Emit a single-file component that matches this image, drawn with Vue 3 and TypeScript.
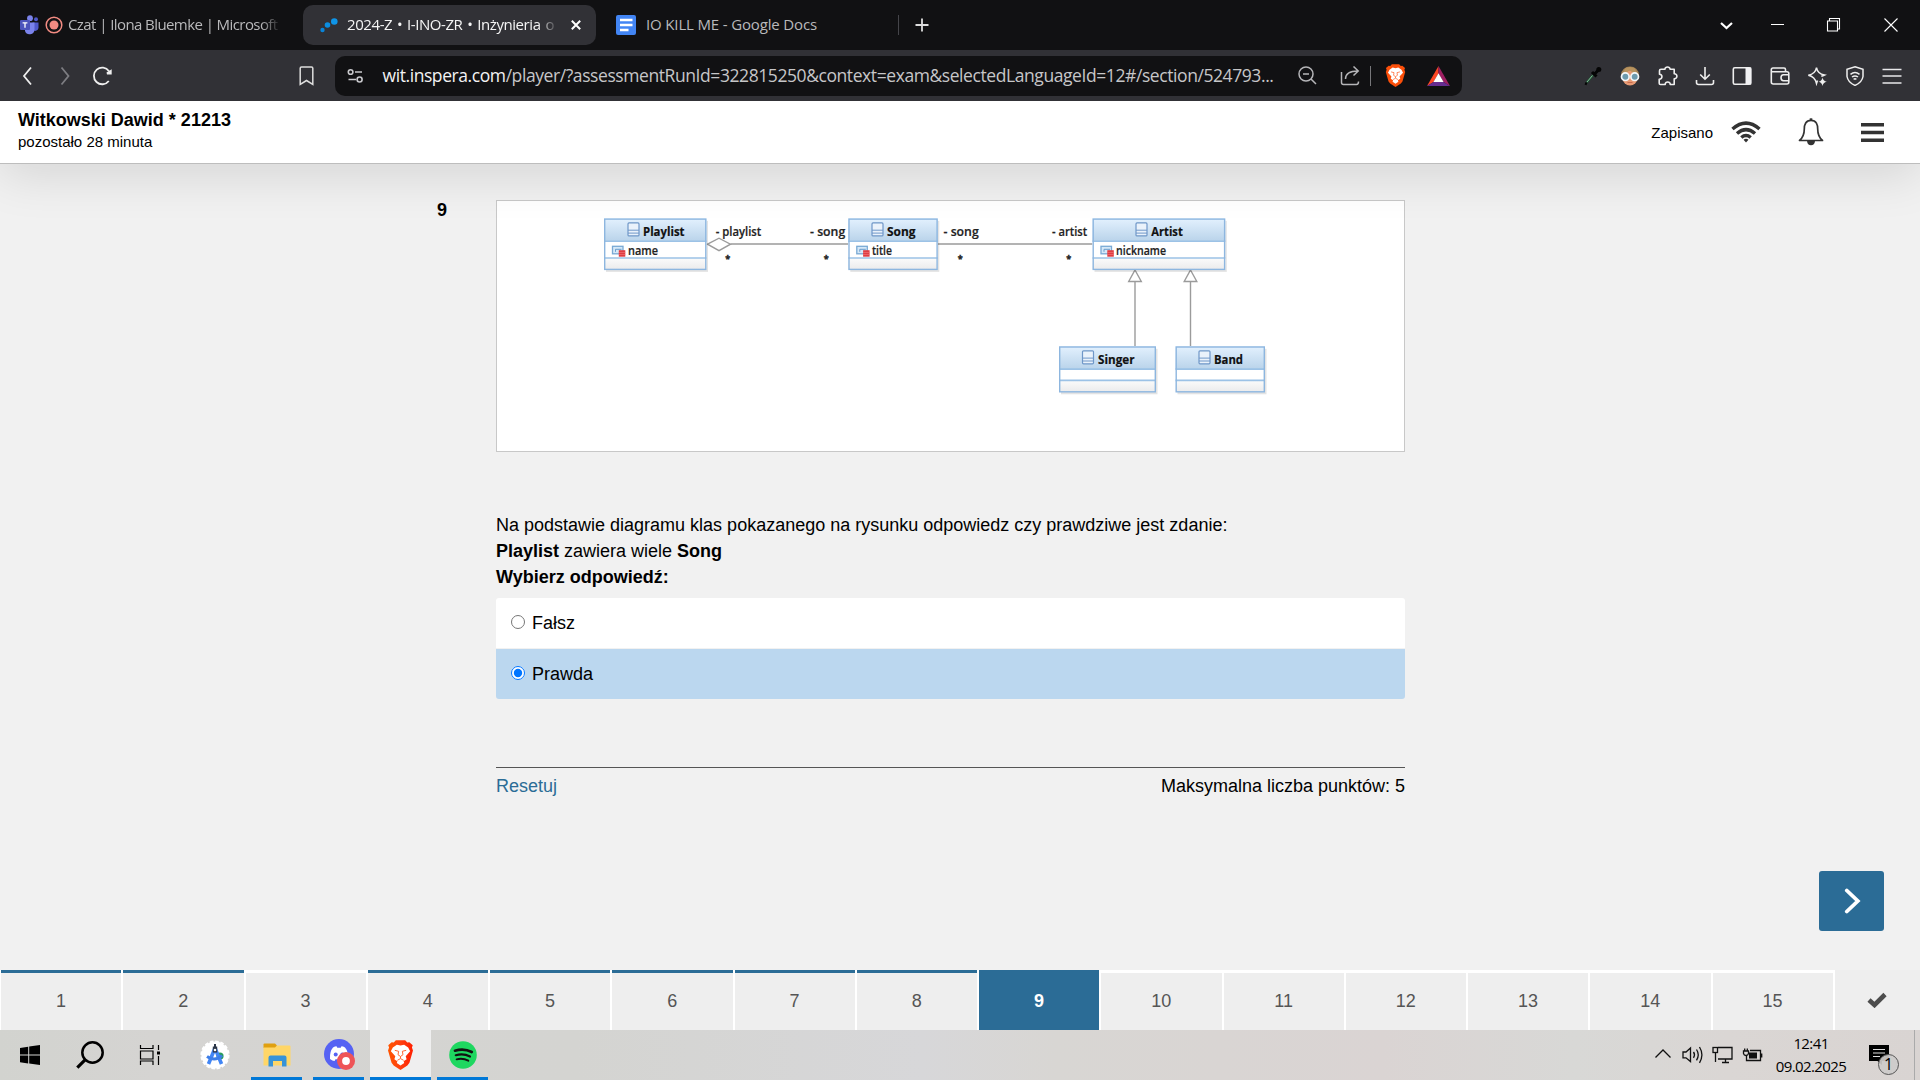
<script setup lang="ts">
import { ref } from 'vue'

interface UmlClass {
  name: string
  x: number
  y: number
  w: number
  h: number
  divider: number
  iconX: number
  textX: number
  textW: number
  attr?: string
  attrX?: number
  attrW?: number
}

interface Label {
  text: string
  x: number
  y: number
  w: number
}

const answer = ref('Prawda')
const options: string[] = ['Fałsz', 'Prawda']

const current = 9
const answered = new Set<number>([1, 2, 4, 5, 6, 7, 8])
const questions: number[] = Array.from({ length: 15 }, (_, i) => i + 1)

const classes: UmlClass[] = [
  { name: 'Playlist', x: 108, y: 18.4, w: 102.5, h: 51, divider: 58, iconX: 132, textX: 147, textW: 41.5, attr: 'name', attrX: 132, attrW: 30 },
  { name: 'Song', x: 352.3, y: 18.4, w: 89.5, h: 51, divider: 58, iconX: 376, textX: 391, textW: 28.5, attr: 'title', attrX: 376, attrW: 20 },
  { name: 'Artist', x: 596.5, y: 18.4, w: 132.8, h: 51, divider: 58, iconX: 640, textX: 655.300, textW: 31.5, attr: 'nickname', attrX: 620, attrW: 50 },
  { name: 'Singer', x: 563, y: 146.3, w: 97, h: 45.5, divider: 180.4, iconX: 586.5, textX: 602, textW: 36.5 },
  { name: 'Band', x: 679.5, y: 146.3, w: 89.5, h: 45.5, divider: 180.4, iconX: 703, textX: 718, textW: 29 },
]

const roles: Label[] = [
  { text: '- playlist', x: 219.8, y: 35.6, w: 45.5 },
  { text: '- song', x: 314, y: 35.6, w: 35.2 },
  { text: '- song', x: 447.5, y: 35.6, w: 35.2 },
  { text: '- artist', x: 556, y: 35.6, w: 35.2 },
]
const stars: number[] = [231.7, 330.2, 464.3, 572.6]
const inherits: number[] = [639, 694.5]
</script>

<template>
  <div class="screen">
    <svg class="defs" width="0" height="0" aria-hidden="true">
      <defs>
        <linearGradient id="head" x1="0" y1="0" x2="0" y2="1">
          <stop offset="0" stop-color="#e3f1fe" />
          <stop offset="1" stop-color="#b9d3ea" />
        </linearGradient>
        <linearGradient id="foot" x1="0" y1="0" x2="0" y2="1">
          <stop offset="0" stop-color="#fbfbfb" />
          <stop offset="1" stop-color="#ebebec" />
        </linearGradient>
        <linearGradient id="braveRed" x1="0" y1="0" x2="1" y2="0">
          <stop offset="0" stop-color="#ff5500" />
          <stop offset=".5" stop-color="#ff4010" />
          <stop offset="1" stop-color="#ff1f00" />
        </linearGradient>
        <symbol id="lion" viewBox="0 0 26 30">
          <path d="M6.5 2.5 8.5.3h9l2 2.2 2-.3L24.800 5.300 24 7.500l1 3-3.400 12.300-2 2.700L13 30l-6.600-4.500-2-2.700L1 10.500l1-3-.8-2.200L4.500 2.200z" />
          <path fill="#fff" d="M13 5.400 9.500 4.700 5.600 7.400 3.700 11.300 8 16.300 7.100 19.200 10 21.200 9.400 23 13 25.600 16.600 23 16 21.200 18.900 19.200 18 16.300 22.300 11.300 20.400 7.400 16.500 4.700z" />
          <path fill="none" stroke="#ff5a20" stroke-width=".9" d="M7.500 10.300 11.200 11.300 10.600 14.700 13 16.500 15.400 14.700 14.800 11.300 18.500 10.300M13 16.500v1.800M10 20.300 13 18.600l3 1.700" />
        </symbol>
      </defs>
    </svg>

    <!-- browser tab strip -->
    <div class="tabs">
      <div class="tab first">
        <svg class="teams" width="19" height="20" viewBox="0 0 19 20">
          <circle cx="10" cy="3.200" r="2.900" fill="#7b83eb" />
          <circle cx="16" cy="4.300" r="2" fill="#5059c9" />
          <path d="M12.500 7.500H18.500V13a3.300 3.300 0 0 1-6 1.500z" fill="#5059c9" />
          <path d="M5 7.500h9.500V14.500a4.900 4.900 0 0 1-9.500 1.500z" fill="#7b83eb" />
          <rect x="0" y="5" width="10" height="10" rx="1" fill="#4b53bc" />
          <path d="M2.600 7.800H7.400M5 7.800V12.700" stroke="#fff" stroke-width="1.300" />
        </svg>
        <svg class="rec" width="18" height="20" viewBox="0 0 18 20">
          <ellipse cx="9" cy="10" rx="7.800" ry="7.800" fill="none" stroke="#f28b82" stroke-width="1.500" />
          <circle cx="9" cy="10" r="4.500" fill="#f28b82" />
        </svg>
        <span class="tab-text fade t1">Czat | Ilona Bluemke | Microsoft</span>
      </div>
      <div class="tab active">
        <svg class="insp" width="18" height="18" viewBox="0 0 18 18">
          <circle cx="2.500" cy="14" r="2.200" fill="#0a84d8" /><circle cx="7.500" cy="9" r="2.800" fill="#0a8de0" /><circle cx="14.300" cy="5.500" r="3.300" fill="#0f95e8" />
        </svg>
        <span class="tab-text fade t2">2024-Z • I-INO-ZR • Inżynieria o</span>
        <svg class="tab-x" width="10" height="10" viewBox="0 0 10 10"><path d="M.8.8 9.200 9.200M9.200.8.8 9.200" stroke="#fff" stroke-width="2" /></svg>
      </div>
      <div class="tab third">
        <svg width="20" height="20" viewBox="0 0 20 20">
          <rect width="20" height="20" rx="2" fill="#4285f4" />
          <path d="M4 5H16.500M4 10H16.500M4 15H12.500" stroke="#fff" stroke-width="2.600" />
        </svg>
        <span class="tab-text t3">IO KILL ME - Google Docs</span>
      </div>
      <i class="tab-sep"></i>
      <svg class="plus" width="14" height="14" viewBox="0 0 14 14"><path d="M7 .5V13.500M.5 7H13.500" stroke="#ddd" stroke-width="1.800" /></svg>
      <svg class="wc" width="193" height="20" viewBox="0 0 193 20" fill="none" stroke="#fff">
        <path d="M2 8 7.500 13 13 8" stroke-width="2.200" />
        <path d="M52 9.500H65" stroke-width="1" />
        <path d="M108.500 6H118.500V16H108.500zM110.500 6V3.500H120.500V14H118.500" stroke-width="1.100" />
        <path d="M165.500 3.500 178.500 16.500M178.500 3.500 165.500 16.500" stroke-width="1.100" />
      </svg>
    </div>

    <!-- address bar -->
    <div class="toolbar">
      <svg class="nav" width="92" height="22" viewBox="0 0 92 22" fill="none">
        <path d="M11 2.500 4 11 11 19.500" stroke="#eee" stroke-width="1.800" />
        <path d="M41.500 2.500 48.500 11 41.500 19.500" stroke="#7d7d82" stroke-width="1.800" />
        <path d="M89 6.200A8.300 8.300 0 1 0 88.800 16" stroke="#eee" stroke-width="1.800" />
        <path d="M86.500 7.500 91.700 4.200V9.500H87z" fill="#eee" />
      </svg>
      <svg class="bm" width="15" height="20" viewBox="0 0 15 20"><path d="M1.200 2.300q0-1.300 1.300-1.300h10q1.300 0 1.300 1.300V18.500L7.500 14.500 1.200 18.500z" fill="none" stroke="#ddd" stroke-width="1.500" /></svg>
      <div class="url">
        <svg class="site" width="17" height="16" viewBox="0 0 17 16" fill="none" stroke="#c8c8cc" stroke-width="1.600">
          <circle cx="3.600" cy="4" r="2.300" /><path d="M8 4H15M1.500 11.500H9" /><circle cx="12.600" cy="11.500" r="2.500" />
        </svg>
        <span class="addr"><b>wit.inspera.com</b>/player/?assessmentRunId=322815250&amp;context=exam&amp;selectedLanguageId=12#/section/524793...</span>
        <svg class="zoomi" width="19" height="19" viewBox="0 0 19 19" fill="none" stroke="#b5b5b8" stroke-width="1.500">
          <circle cx="8" cy="8" r="7" /><path d="M5 8H11M13 13 18 18" />
        </svg>
        <svg class="share" width="20" height="20" viewBox="0 0 20 20" fill="none" stroke="#b5b5b8" stroke-width="1.500">
          <path d="M1.500 6V16.500q0 2 2 2H16.500q2 0 2-3M5.500 13C5.500 8 9 5 18 5M13.500.5 18.200 5 13.500 9.500" />
        </svg>
        <i class="url-sep"></i>
        <svg class="lion1" width="21" height="23" viewBox="0 0 26 30" preserveAspectRatio="none" fill="#fb4f0a"><use href="#lion" width="26" height="30" /></svg>
        <svg class="bat" width="23" height="20" viewBox="0 0 23 20">
          <path d="M11.500 0 0 20 6.500 16 11.500 7.500z" fill="#ff4724" />
          <path d="M11.500 0 23 20 16.500 16 11.500 7.500z" fill="#9e1f63" />
          <path d="M0 20H23L16.500 16H6.500z" fill="#662d91" />
          <path d="M11.500 7.300 6.400 16H16.600z" fill="#fff" />
        </svg>
      </div>
      <div class="exts">
        <svg width="20" height="20" viewBox="0 0 20 20">
          <path d="M3.500 17 10 9" stroke="#254a35" stroke-width="2.600" /><path d="M4 16 9.500 9.500" stroke="#8fd0a5" stroke-width=".9" /><path d="M2.500 18.800 3.500 16.500" stroke="#050505" stroke-width="2" />
          <path d="M9 6 13.500 10.500M11 8.500 16 3.500" stroke="#050505" stroke-width="3" /><circle cx="15.800" cy="3.600" r="2.500" fill="#050505" />
        </svg>
        <svg width="20" height="20" viewBox="0 0 20 20">
          <ellipse cx="10" cy="9" rx="9" ry="8.500" fill="#a58455" /><ellipse cx="10" cy="12" rx="7.500" ry="7.500" fill="#e69a74" />
          <path d="M3 8Q7 8 9.500 3.500 13 8 17 8L15 2.500 10 1 5 2.500z" fill="#b8935e" />
          <circle cx="5.300" cy="10.700" r="3.800" fill="#6d9aad" stroke="#f2f6f8" stroke-width="1.700" /><circle cx="14.700" cy="10.700" r="3.800" fill="#6d9aad" stroke="#f2f6f8" stroke-width="1.700" />
          <path d="M7.500 16.500H12.500" stroke="#c96b4e" />
        </svg>
        <svg width="20" height="20" viewBox="0 0 20 20" fill="none" stroke="#eee" stroke-width="1.600" stroke-linejoin="round">
          <path d="M3 3.200H7C6.600.2 12.400.2 12 3.200H16.200V7.700C19.800 7.500 19.800 13 16.200 12.700V18.500H12.200C12.600 15.200 6.800 15.200 7.200 18.500H2.500Q1.200 18.500 1.200 17.200V13.200C4.800 13 4.800 8.500 1.500 8.200V4.700Q1.500 3.200 3 3.200z" />
        </svg>
        <svg width="20" height="20" viewBox="0 0 20 20" fill="none" stroke="#eee" stroke-width="1.600">
          <path d="M10 1V13M5.200 8.500 10 13.200 14.800 8.500M1.500 14V16.500Q1.500 18.500 3.500 18.500H16.500Q18.500 18.500 18.500 16.500V14" />
        </svg>
        <svg width="20" height="20" viewBox="0 0 20 20">
          <rect x="1.300" y="1.800" width="17.400" height="16.500" rx="1.500" fill="none" stroke="#eee" stroke-width="1.600" /><rect x="13.500" y="1.500" width="5.800" height="17" fill="#f1f1f3" />
        </svg>
        <svg width="20" height="20" viewBox="0 0 20 20" fill="none" stroke="#eee" stroke-width="1.600">
          <path d="M15.500 5.500V3.500Q15.500 2 14 2H3Q1.300 2 1.300 3.700V16Q1.300 18 3.300 18H17Q18.800 18 18.800 16V7.500Q18.800 5.700 17 5.700H1.500M18.500 8.800H13.500Q11 9 11 11.800T13.500 14.700H18.500" />
        </svg>
        <svg width="20" height="20" viewBox="0 0 20 20">
          <path d="M9.500 1.500Q10.500 7.800 17.500 9 16 9.700 14.300 10.300M9.500 1.500Q8.500 7.800 1.300 9.200 8 10.500 9.500 17.500 10 16 10.500 14.500" fill="none" stroke="#eee" stroke-width="1.500" />
          <path d="M15.500 11.500Q16 15 19.800 15.700 16 16.400 15.500 20 15 16.400 11.500 15.700 15 15 15.500 11.500z" fill="#eee" />
        </svg>
        <svg width="20" height="20" viewBox="0 0 20 20" fill="none" stroke="#eee" stroke-width="1.500">
          <path d="M10 .8 18 3.300V10.500Q17 16.500 10 19.400 3 16.500 2 10.500V3.300zM5.500 8.300Q10 4.800 14.500 8.300M7 11Q10 8.800 13 11M8.600 13.300Q10 12.400 11.400 13.300" />
        </svg>
        <svg width="20" height="20" viewBox="0 0 20 20"><path d="M.5 3.500H19.500M.5 10H19.500M.5 17H19.500" stroke="#e8e8ea" stroke-width="1.600" /></svg>
      </div>
    </div>

    <!-- exam header -->
    <header class="exam-head">
      <div class="who">
        <strong>Witkowski Dawid * 21213</strong>
        <span>pozostało 28 minuta</span>
      </div>
      <span class="saved">Zapisano</span>
      <svg class="wifi" width="30" height="22" viewBox="0 0 30 22" fill="none" stroke="#333" stroke-width="3.500">
        <path d="M1.500 8Q15-3.800 28.500 8M6 12.500Q15 4.800 24 12.500M10.300 16.500Q15 12.600 19.700 16.500" /><path d="M12.500 18.700Q15 17 17.500 18.700L15 21.500z" fill="#333" stroke="none" />
      </svg>
      <svg class="bell" width="26" height="28" viewBox="0 0 26 28">
        <path d="M13 2.300C7.500 2.300 6.300 7 6.300 11 6.300 16.500 4.500 20 1.500 22.500H24.500C21.500 20 19.700 16.500 19.700 11 19.700 7 18.500 2.300 13 2.300z" fill="none" stroke="#333" stroke-width="1.700" stroke-linejoin="round" />
        <path d="M13 .3V2.500" stroke="#333" stroke-width="2.600" /><path d="M9 23H17Q16.500 27.300 13 27.300T9 23z" fill="#333" />
      </svg>
      <svg class="burger" width="23" height="19" viewBox="0 0 23 19"><path d="M0 1.800H23M0 9.500H23M0 17.200H23" stroke="#333" stroke-width="3.600" /></svg>
    </header>

    <main class="exam">
      <span class="qnum">9</span>
      <section class="question">
        <svg class="diagram" width="907" height="250" viewBox="1 1 907 250">
          <g stroke="#9b9b9b" stroke-width="1.400" fill="#fff">
            <path d="M234.500 44H352M441.500 44H596.500" />
            <path d="M211.500 44.200 223 38.200 234.500 44.200 223 50.700z" />
            <g v-for="x in inherits" :key="x">
              <path :d="`M${x} 82V146`" />
              <path :d="`M${x} 70L${x + 6.300} 81.500H${x - 6.300}z`" />
            </g>
          </g>
          <g v-for="c in classes" :key="c.name">
            <rect :x="c.x + 2" :y="c.y + 2.500" :width="c.w - .5" :height="c.h" fill="#000" opacity=".11" />
            <rect :x="c.x" :y="c.y" :width="c.w" :height="c.h" fill="#fff" />
            <rect :x="c.x" :y="c.y" :width="c.w" height="23" fill="url(#head)" />
            <rect :x="c.x" :y="c.divider" :width="c.w" :height="c.y + c.h - c.divider" fill="url(#foot)" />
            <path :d="`M${c.x} ${c.y + 22.800}h${c.w}M${c.x} ${c.divider}h${c.w}`" stroke="#9cc2e6" stroke-width="1.600" />
            <rect :x="c.x + .7" :y="c.y + .7" :width="c.w - 1.400" :height="c.h - .7" fill="none" stroke="#8db6df" stroke-width="1.400" />
            <rect :x="c.iconX" :y="c.y + 4.500" width="11" height="13" rx="1" fill="#eaf2fb" stroke="#6f97c8" stroke-width="1.200" />
            <path :d="`M${c.iconX} ${c.y + 11.800}h11M${c.iconX} ${c.y + 14.700}h11`" stroke="#6f97c8" stroke-width="1" />
            <text class="cls" :x="c.textX" :y="c.y + 17.200" :textLength="c.textW" lengthAdjust="spacingAndGlyphs">{{ c.name }}</text>
            <g v-if="c.attr">
              <rect :x="c.x + 8.500" :y="46.300" width="10.500" height="7.500" fill="#d4e8f8" stroke="#79a9d4" stroke-width="1.300" />
              <path :d="`M${c.x + 11.500} 51.800V49.300H${c.x + 17.500}`" fill="none" stroke="#6a9ccb" />
              <rect :x="c.x + 14.800" y="50.200" width="6.500" height="6.500" fill="#e03c42" />
              <path :d="`M${c.x + 14.800} 52.500h6.500M${c.x + 14.800} 54.500h6.500`" stroke="#f07a7d" stroke-width=".6" />
              <text class="lbl" :x="c.attrX" y="55" :textLength="c.attrW" lengthAdjust="spacingAndGlyphs">{{ c.attr }}</text>
            </g>
          </g>
          <text v-for="r in roles" :key="r.x" class="lbl" :x="r.x" :y="r.y" :textLength="r.w" lengthAdjust="spacingAndGlyphs">{{ r.text }}</text>
          <text v-for="s in stars" :key="s" class="star" :x="s" y="62.300" text-anchor="middle">*</text>
        </svg>

        <div class="prompt">
          <p>Na podstawie diagramu klas pokazanego na rysunku odpowiedz czy prawdziwe jest zdanie:</p>
          <p><b>Playlist</b> zawiera wiele <b>Song</b></p>
          <p><b>Wybierz odpowiedź:</b></p>
        </div>

        <div class="options">
          <label v-for="o in options" :key="o" class="option" :class="{ on: answer === o }">
            <input v-model="answer" type="radio" name="answer" :value="o" />
            <span>{{ o }}</span>
          </label>
        </div>

        <footer class="qfoot">
          <a>Resetuj</a>
          <span>Maksymalna liczba punktów: 5</span>
        </footer>
      </section>
      <button class="next" type="button" aria-label="Next">
        <svg width="17" height="26" viewBox="0 0 17 26"><path d="M2.800 2.500 13.800 13 2.800 23.500" fill="none" stroke="#fff" stroke-width="3.800" stroke-linecap="round" /></svg>
      </button>
    </main>

    <nav class="pager">
      <div v-for="q in questions" :key="q" class="page" :class="{ done: answered.has(q), current: q === current }"><span>{{ q }}</span></div>
      <div class="submit">
        <svg width="20" height="16" viewBox="0 0 20 16"><path d="M2 8 7.500 13 18 2.500" fill="none" stroke="#4d4d4d" stroke-width="4.600" /></svg>
      </div>
    </nav>

    <!-- system taskbar -->
    <div class="taskbar">
      <div class="sys"><svg width="20" height="20" viewBox="0 0 20 20"><path d="M0 2.900 8.200 1.700V9.500H0zM9.200 1.500 20 0V9.500H9.200zM0 10.500H8.200V18.400L0 17.200zM9.200 10.500H20V20L9.200 18.500z" /></svg></div>
      <div class="sys"><svg width="28" height="28" viewBox="0 0 28 28" fill="none" stroke="#000"><circle cx="16.500" cy="11.500" r="10.200" stroke-width="2.500" /><path d="M9.300 18.700 1.300 26.700" stroke-width="3.200" /></svg></div>
      <div class="sys"><svg width="22" height="20" viewBox="0 0 22 20" fill="none" stroke="#000" stroke-width="1.200"><path d="M1.500 0V3.500H14V0M1.500 20V16H14V20M1.500 6H14V14H1.500zM19.500 0V5M19.500 11V20" /><path d="M18 6.500h3v3h-3z" fill="#000" stroke="none" /></svg></div>
      <div class="app studio">
        <svg width="30" height="30" viewBox="0 0 30 30">
          <circle cx="15" cy="15" r="13.600" fill="#fff" /><circle cx="15" cy="15" r="13.800" fill="none" stroke="#fff" stroke-width="1.600" stroke-dasharray="3.600 1.800" />
          <circle cx="20" cy="16" r="3.600" fill="#2a9d5c" />
          <path d="M15 8 8.500 24M15 8 21.500 24" stroke="#4286f5" stroke-width="3.600" /><path d="M7 16.500Q15 22 22 15.500" fill="none" stroke="#3d7ee8" stroke-width="3" />
          <path d="M12.800 6.500H17.200V12.500H12.800z" fill="#2b3648" /><circle cx="15" cy="10" r="1.300" fill="#fff" /><path d="M15 4V7" stroke="#2b3648" stroke-width="2" />
        </svg>
      </div>
      <div class="app run">
        <svg width="28" height="24" viewBox="0 0 28 24">
          <path d="M.5 1.500Q.5.500 1.500.5H12L14 2.500V5H.5z" fill="#e0a010" /><path d="M.5 4.500H12L14 2.500H26.500Q27.500 2.500 27.500 3.500V22.500H.5z" fill="#ffd667" />
          <path d="M5.500 23.500V14.500Q5.500 12.500 7.500 12.500H21.500Q23.500 12.500 23.500 14.500V23.500H19V18H10V23.500z" fill="#3793d8" />
        </svg>
      </div>
      <div class="app run">
        <svg class="discord" width="32" height="32" viewBox="0 0 32 32">
          <circle cx="15" cy="15" r="15" fill="#5662f3" />
          <path d="M6 20Q5.500 12.500 9 8.500 11 7.300 12.500 7.300L13.300 8.700H16.700L17.500 7.300Q19 7.300 21 8.500 24.500 12.500 24 20 21.500 22 19.500 22L18.500 20.300H11.500L10.500 22Q8.500 22 6 20z" fill="#fff" />
          <circle cx="11.700" cy="15.500" r="2" fill="#5662f3" /><circle cx="18.300" cy="15.500" r="2" fill="#5662f3" />
          <circle cx="22" cy="22" r="9" fill="#ee5457" /><circle cx="22" cy="22" r="3.900" fill="#fff" />
        </svg>
      </div>
      <div class="app run wide"><svg width="27" height="30" viewBox="0 0 26 30" preserveAspectRatio="none" fill="url(#braveRed)"><use href="#lion" width="26" height="30" /></svg></div>
      <div class="app run">
        <svg width="28" height="28" viewBox="0 0 28 28" fill="none" stroke="#111" stroke-linecap="round"><circle cx="14" cy="14" r="13.800" fill="#1ed760" stroke="none" /><path d="M6 9.700Q15 7 22.800 11" stroke-width="2.700" /><path d="M6.800 14.200Q14.500 12 21 15.500" stroke-width="2.200" /><path d="M7.600 18.300Q14 16.800 19.300 19.700" stroke-width="1.900" /></svg>
      </div>
      <div class="tray">
        <svg width="110" height="24" viewBox="0 0 110 24" fill="none" stroke="#111" stroke-width="1.300">
          <path d="M1.500 14.500 9 7 16.500 14.500" />
          <path d="M29 9H32L36.500 5V18.500L32 14.800H29zM39.500 9Q41.500 11.800 39.500 14.800M42.500 6.500Q46 11.800 42.500 17.300M45.500 4Q50.300 11.800 45.500 19.800" />
          <path d="M64 4.500H78V16H64M61.500 10V19M68 19.500H75M71.500 16V19.500" /><rect x="59" y="4.500" width="4.500" height="5" />
          <path d="M96 7.500H106.500V17.500H92.500V13M107.700 10.500V14.500" /><rect x="95" y="9.500" width="8" height="6" fill="#111" stroke="none" />
          <path d="M89.500 8H94.500V10.500Q94 12.500 92 12.500T89.500 10.500zM90.700 5.500V8M93.300 5.500V8" />
        </svg>
      </div>
      <div class="clock"><span>12:41</span><span class="date">09.02.2025</span></div>
      <div class="note">
        <svg width="20" height="20" viewBox="0 0 20 20"><path d="M0 0H20V16H13V20L8.500 16H0z" fill="#000" /><path d="M4 4.500H16M4 8H16M4 11.500H11" stroke="#ddd" stroke-width="1.200" /></svg>
        <span class="badge">1</span>
      </div>
      <i class="peek"></i>
    </div>
  </div>
</template>

<style>
body {
  margin: 0;
  overflow: hidden;
}
</style>

<style scoped>
.screen {
  width: 1920px;
  height: 1080px;
  display: flex;
  flex-direction: column;
  overflow: hidden;
  background: #f1f1f1;
  color: #000;
  font-family: "Liberation Sans", Arial, sans-serif;
}
.defs { position: absolute; }
svg { display: block; flex: none; }
i { flex: none; }

.tabs {
  height: 50px;
  flex: none;
  display: flex;
  align-items: center;
  background: #111113;
  font-family: "Open Sans", "Noto Sans", sans-serif;
  font-size: 15px;
  color: #b9b9bb;
}
.tab { display: flex; align-items: center; box-sizing: border-box; }
.tab-text { margin-bottom: 2px; white-space: nowrap; overflow: hidden; line-height: 24px; }
.fade { mask-image: linear-gradient(to right, #000 calc(100% - 20px), transparent); }
.first { width: 303px; padding-left: 20px; }
.rec { margin-left: 6px; }
.t1 { width: 213px; margin-left: 5px; letter-spacing: -0.58px; }
.active {
  width: 293px;
  height: 40px;
  padding-left: 17px;
  border-radius: 10px;
  background: #313136;
  color: #f5f5f5;
}
.t2 { width: 211px; margin-left: 9px; letter-spacing: -0.42px; word-spacing: 1.3px; }
.tab-x { margin-left: 13px; }
.third { width: 302px; padding-left: 20px; }
.t3 { margin-left: 10px; letter-spacing: -0.15px; }
.tab-sep { width: 1px; height: 20px; background: #45454a; }
.plus { margin-left: 16px; }
.wc { margin-left: auto; margin-right: 8px; }

.toolbar {
  height: 51px;
  flex: none;
  display: flex;
  align-items: center;
  background: #313136;
}
.nav { margin-left: 20px; }
.bm { margin-left: 187px; }
.url {
  width: 1127px;
  height: 40px;
  margin-left: 21px;
  display: flex;
  align-items: center;
  border-radius: 10px;
  background: #111113;
  font-family: "Open Sans", "Noto Sans", sans-serif;
}
.site { margin-left: 12px; }
.addr {
  width: 892px;
  margin: 0 0 2px 18.5px;
  font-size: 17.5px;
  line-height: 26px;
  letter-spacing: -0.42px;
  white-space: nowrap;
  color: #c6c6c8;
}
.addr b { font-weight: 400; color: #f3f3f3; }
.zoomi { margin-left: 23.5px; }
.share { margin-left: 23px; }
.url-sep { width: 1px; height: 20px; margin-left: 10px; background: #77777a; }
.lion1 { margin-left: 14px; }
.bat { margin-left: 21px; }
.exts {
  width: 337px;
  margin-left: 112px;
  display: grid;
  grid-template-columns: repeat(9, 1fr);
  justify-items: center;
}

.exam-head {
  height: 62px;
  flex: none;
  display: flex;
  align-items: center;
  background: #fff;
  border-bottom: 1px solid #bdbdbd;
  box-shadow: 0 10px 50px rgba(0, 0, 0, 0.12);
  z-index: 1;
}
.toolbar, .tabs { z-index: 2; }
.who {
  margin: 0 auto 3px 18px;
  display: flex;
  flex-direction: column;
}
.who strong { font-size: 18px; line-height: 22px; }
.who span { font-size: 15px; line-height: 22px; }
.saved { font-size: 15px; }
.wifi { margin-left: 18px; }
.bell { margin-left: 37px; }
.burger { margin: 0 36px 0 37px; }

.exam {
  height: 806px;
  flex: none;
  box-sizing: border-box;
  position: relative;
  display: flex;
  align-items: flex-start;
  padding: 36px 0 0 437px;
  font-size: 18px;
}
.qnum { width: 59px; font-weight: 700; line-height: 20px; }
.question { width: 909px; }
.diagram { border: 1px solid #c8c8c8; background: #fff; }
.cls { font: 700 12.500px "Open Sans", "Noto Sans", sans-serif; fill: #111; stroke: #111; stroke-width: 0.2px; }
.lbl { font: 600 12.500px "Open Sans", "Noto Sans", sans-serif; fill: #222; stroke: #222; stroke-width: 0.2px; }
.star { font: 700 9px "Open Sans", "Noto Sans", sans-serif; fill: #222; stroke: #222; stroke-width: 0.4px; }

.prompt { margin-top: 60px; }
.prompt p { margin: 0; line-height: 26px; }
.options {
  margin-top: 8px;
  display: flex;
  flex-direction: column;
  gap: 1px;
  border-radius: 3px;
  overflow: hidden;
}
.option {
  height: 50px;
  display: flex;
  align-items: center;
  background: #fff;
}
.option.on { background: #bbd7ef; }
.option input { width: 14px; height: 14px; margin: 0 0 2px 15px; }
.option span { margin-left: 7px; }
.qfoot {
  margin-top: 68px;
  padding-top: 5px;
  display: flex;
  justify-content: space-between;
  border-top: 1px solid #555;
  line-height: 26px;
}
.qfoot a { color: #2b6c96; }
.next {
  position: absolute;
  right: 36px;
  bottom: 39px;
  width: 65px;
  height: 60px;
  padding: 0 0 0 25px;
  border: 0;
  border-radius: 3px;
  background: #2b6c96;
}

.pager {
  height: 60px;
  flex: none;
  display: flex;
  padding-left: 1px;
  background: #fff;
}
.page {
  width: 122.250px;
  flex: none;
  box-sizing: border-box;
  padding-right: 2px;
}
.page span {
  height: 60px;
  box-sizing: border-box;
  display: flex;
  align-items: center;
  justify-content: center;
  padding-bottom: 1px;
  border-top: 3px solid #fff;
  background: #eee;
  color: #555;
  font-size: 18px;
}
.page.done span { border-top-color: #2b6c96; }
.page.current span {
  border-top-color: #2b6c96;
  background: #2b6c96;
  color: #fff;
  font-weight: 700;
}
.submit {
  flex: 1;
  display: flex;
  align-items: center;
  justify-content: center;
  padding-bottom: 1px;
  background: #eee;
}

.taskbar {
  height: 50px;
  flex: none;
  display: flex;
  background: linear-gradient(to right, #d2d3cf, #d5d4d2 8%, #d4d4d1 30%, #d7d7d9 48%, #d8d6d3 55%, #dad4d3 72%, #d8d8d6 82%, #dad6d4 90%, #d9d4d2);
}
.sys { width: 60px; display: grid; place-items: center; }
.app {
  width: 61px;
  margin-right: 1px;
  box-sizing: border-box;
  position: relative;
  display: grid;
  place-items: center;
}
.studio { margin-left: 4px; }
.run::after {
  content: "";
  position: absolute;
  left: 5px;
  right: 5px;
  bottom: 0;
  height: 3px;
  background: #0078d7;
}
.wide { background: #efefef; }
.wide::after { left: 0; right: 0; }
.discord { margin-left: 2px; }
.tray { margin-left: auto; margin-right: 1px; display: flex; align-items: center; }
.clock {
  width: 92px;
  display: flex;
  flex-direction: column;
  align-items: center;
  padding-top: 2px;
  font: 15px/23px "Open Sans", "Noto Sans", sans-serif;
  letter-spacing: -0.6px;
}
.note { position: relative; width: 45px; padding: 15px 0 0 12px; box-sizing: border-box; }
.badge {
  position: absolute;
  left: 21px;
  top: 24px;
  width: 19px;
  height: 19px;
  border: 1px solid #555;
  border-radius: 50%;
  background: rgba(205, 203, 202, 0.92);
  text-align: center;
  font: 16px/19px "Open Sans", "Noto Sans", sans-serif;
}
.peek { width: 5px; margin-left: 12px; border-left: 1px solid #aaa; }
</style>
